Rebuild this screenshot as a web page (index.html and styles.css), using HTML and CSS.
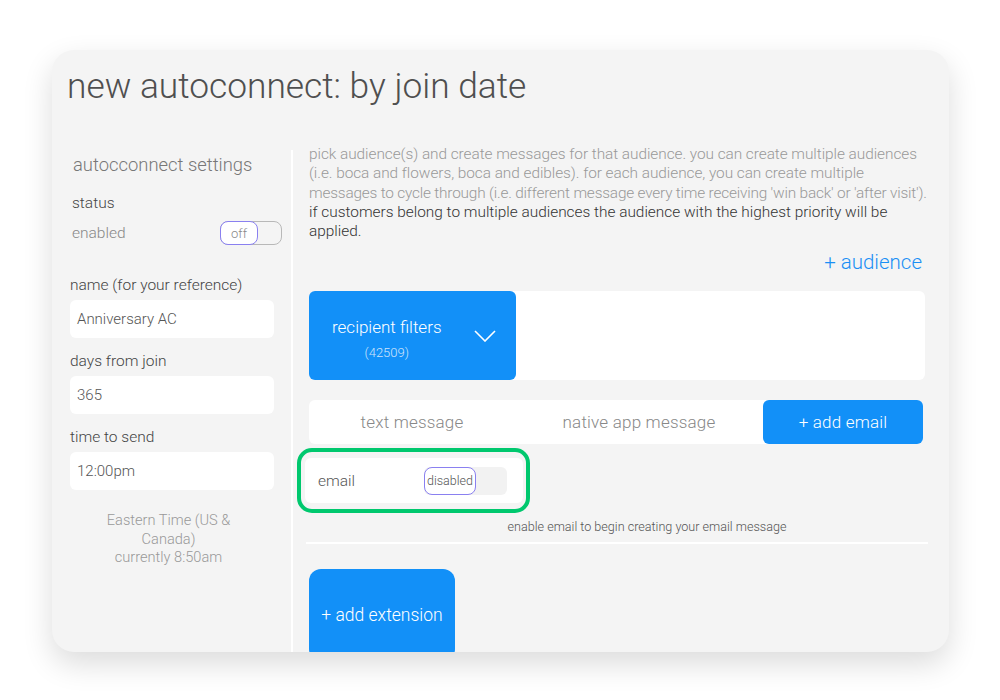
FILE: index.html
```html
<!DOCTYPE html>
<html lang="en">
<head>
  <meta charset="UTF-8">
  <meta name="viewport" content="width=device-width, initial-scale=1.0">
  <title>new autoconnect</title>
  <link rel="stylesheet" href="styles.css">
</head>
<body>
  <div class="card">
    <h1 class="title">new autoconnect: by join date</h1>

    <div class="body">
      <!-- settings column -->
      <div class="settings">
        <h2 class="settings-head">autocconnect settings</h2>
        <p class="label">status</p>
        <div class="status-row">
          <span class="muted">enabled</span>
          <div class="toggle">
            <span class="knob">off</span>
          </div>
        </div>

        <div class="fields">
          <p class="label">name (for your reference)</p>
          <div class="input">Anniversary AC</div>
          <p class="label">days from join</p>
          <div class="input">365</div>
          <p class="label">time to send</p>
          <div class="input">12:00pm</div>
          <p class="tz">Eastern Time (US &amp;<br>Canada)<br>currently 8:50am</p>
        </div>
      </div>

      <!-- audiences column -->
      <div class="main">
        <div class="intro">
          <p class="soft">
            <span class="line">pick audience(s) and create messages for that audience. you can create multiple audiences</span>
            <span class="line">(i.e. boca and flowers, boca and edibles). for each audience, you can create multiple</span>
            <span class="line line-tight">messages to cycle through (i.e. different message every time receiving 'win back' or 'after visit').</span>
          </p>
          <p>if customers belong to multiple audiences the audience with the highest priority will be applied.</p>
        </div>

        <div class="add-audience">+ audience</div>

        <div class="audience">
          <div class="filters">
            <div class="filters-text">
              <span class="filters-name">recipient filters</span>
              <span class="filters-count">(42509)</span>
            </div>
            <svg class="chevron" width="22" height="12" viewBox="0 0 22 12">
              <path d="M1 1 L11 11 L21 1" fill="none" stroke="#fff" stroke-width="1.6"/>
            </svg>
          </div>
        </div>

        <div class="tabs">
          <div class="tab">text message</div>
          <div class="tab">native app message</div>
          <div class="tab tab-add">+ add email</div>
        </div>

        <div class="highlight">
          <div class="email-box">
            <span class="email-label">email</span>
            <div class="toggle-wide">
              <span class="knob knob-wide">disabled</span>
            </div>
          </div>
        </div>

        <p class="hint">enable email to begin creating your email message</p>
        <div class="rule"></div>

        <div class="extension">+ add extension</div>
      </div>
    </div>
  </div>
</body>
</html>
```

FILE: styles.css
```css
* {
  margin: 0;
  padding: 0;
  box-sizing: border-box;
}

body {
  font-family: Roboto, 'Liberation Sans', sans-serif;
  font-weight: 300;
  background-color: #ffffff;
  color: #444;
  height: 700px;
  overflow: hidden;
}

.card {
  margin: 50px 0 0 52px;
  width: 897px;
  height: 602px;
  background-color: #f4f4f4;
  border-radius: 22px;
  overflow: hidden;
  box-shadow: 0 12px 30px rgba(0, 0, 0, 0.14);
}

.title {
  font-size: 35.3px;
  font-weight: 300;
  color: #4f4f4f;
  padding: 15px 0 0 15px;
  height: 100px;
}

.body {
  display: flex;
  height: 502px;
}

/* Settings column */
.settings {
  width: 241px;
  border-right: 2px solid #ffffff;
  flex-shrink: 0;
}

.settings-head {
  font-size: 18.4px;
  font-weight: 300;
  line-height: 21px;
  color: #777;
  padding: 4px 0 0 21px;
  height: 43px;
}

.label {
  font-size: 15.5px;
  line-height: 20px;
  color: #444;
  padding-left: 20px;
}

.status-row {
  display: flex;
  justify-content: space-between;
  align-items: center;
  padding: 0 9px 0 20px;
  height: 40px;
}

.muted {
  font-size: 15.5px;
  color: #888;
}

.toggle {
  width: 62px;
  height: 24px;
  border: 1px solid #b8b8b8;
  border-radius: 8px;
  display: flex;
}

.knob {
  width: 38px;
  height: 24px;
  margin: -1px 0 0 -1px;
  border: 1px solid #8a80f0;
  border-radius: 8px;
  background-color: #ffffff;
  font-size: 13px;
  color: #888;
  display: flex;
  align-items: center;
  justify-content: center;
}

.fields {
  padding: 22px 17px 0 18px;
}

.fields .label {
  padding-left: 0;
}

.input {
  background-color: #ffffff;
  border-radius: 6px;
  height: 38px;
  margin: 5px 0 13px;
  padding-left: 7px;
  display: flex;
  align-items: center;
  font-size: 15px;
  color: #555;
}

.tz {
  text-align: center;
  font-size: 14.6px;
  line-height: 18.5px;
  color: #999;
  padding: 8px 7px 0 0;
}

/* Audience column */
.main {
  flex: 1 1 0;
  min-width: 0;
  padding: 0 24px 0 16px;
}

.intro {
  font-size: 15.4px;
  line-height: 19.25px;
  color: #333;
  margin-top: -5px;
}

.soft {
  color: #999;
  letter-spacing: -0.05px;
}

.line {
  display: block;
  white-space: nowrap;
}

.line-tight {
  letter-spacing: -0.2px;
}

.add-audience {
  text-align: right;
  font-size: 20.5px;
  line-height: 24px;
  color: #1a8ff5;
  padding: 9px 3px 0 0;
  height: 50px;
}

.audience {
  background-color: #ffffff;
  border-radius: 6px;
  height: 89px;
}

.filters {
  width: 207px;
  height: 89px;
  background-color: #1290f8;
  border-radius: 6px;
  display: flex;
  align-items: center;
  padding: 0 20px 0 23px;
  justify-content: space-between;
}

.filters-text {
  display: flex;
  flex-direction: column;
  align-items: center;
  padding-top: 6px;
}

.filters-name {
  font-size: 17px;
  color: #ffffff;
}

.filters-count {
  font-size: 13px;
  color: #cfe4fb;
  margin-top: 8px;
}

.tabs {
  display: flex;
  background-color: #ffffff;
  border-radius: 6px;
  height: 44px;
  margin-top: 20px;
  width: 614px;
}

.tab {
  display: flex;
  align-items: center;
  justify-content: center;
  font-size: 17px;
  letter-spacing: 0.2px;
  color: #888;
}

.tab:nth-child(1) {
  width: 206px;
}

.tab:nth-child(2) {
  width: 248px;
}

.tab-add {
  flex-grow: 1;
  background-color: #1290f8;
  color: #ffffff;
  border-radius: 6px;
}

.highlight {
  width: 233px;
  height: 65px;
  margin: 4px 0 0 -12px;
  border: 4px solid #00c86e;
  border-radius: 15px;
  padding: 6px 0 0 4px;
}

.email-box {
  width: 218px;
  height: 45px;
  background-color: #ffffff;
  border-radius: 6px;
  display: flex;
  align-items: center;
  justify-content: space-between;
  padding: 0 16px 0 13px;
}

.email-label {
  font-size: 15.5px;
  color: #555;
}

.toggle-wide {
  width: 83px;
  height: 28px;
  background-color: #f2f2f2;
  border-radius: 6px;
}

.knob-wide {
  width: 52px;
  height: 28px;
  margin: 0;
  font-size: 12.5px;
  color: #555;
}

.hint {
  text-align: center;
  font-size: 12.6px;
  line-height: 15px;
  color: #555;
  padding: 6px 0 0 60px;
  height: 29px;
}

.rule {
  height: 2px;
  background-color: #ffffff;
  margin: 0 -3px 0 -3px;
}

.extension {
  width: 146px;
  height: 92px;
  margin-top: 25px;
  background-color: #1290f8;
  border-radius: 12px;
  display: flex;
  align-items: center;
  justify-content: center;
  font-size: 17.5px;
  color: #ffffff;
}
```
